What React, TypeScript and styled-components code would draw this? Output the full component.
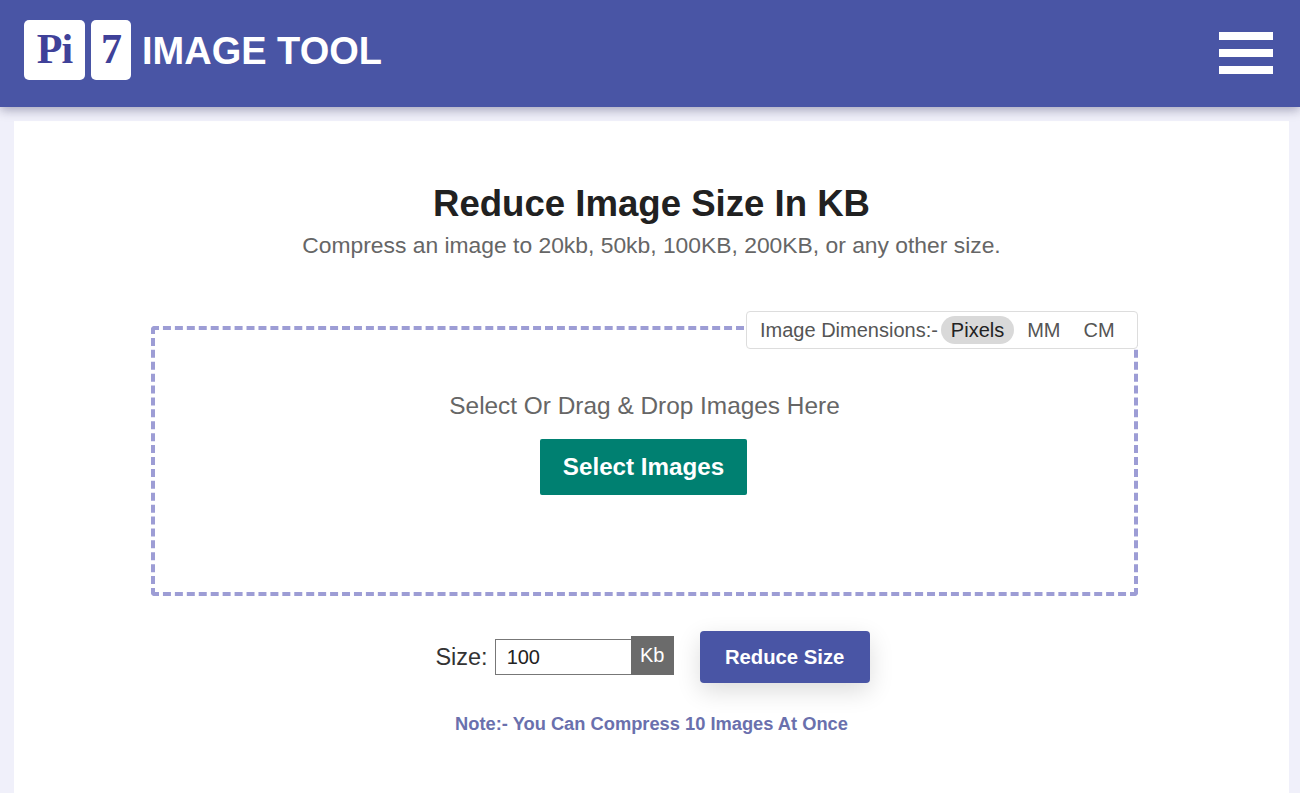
import styled, { createGlobalStyle } from "styled-components";

const GlobalStyle = createGlobalStyle`
  html, body {
    margin: 0;
    padding: 0;
    height: 793px;
    overflow: hidden;
    background: #f0f0fa;
    font-family: "Liberation Sans", Arial, sans-serif;
  }
  * {
    box-sizing: border-box;
  }
`;

const Header = styled.header`
  height: 107px;
  background: #4955a5;
  box-shadow: 0 3px 10px rgba(50, 50, 90, 0.4);
  display: flex;
  align-items: center;
  justify-content: space-between;
  padding: 0 27px 2px 24px;
  position: relative;
`;
const Logo = styled.div`
  display: flex;
  align-items: center;
  gap: 6px;
  margin-bottom: 5px;
`;
const Tile = styled.div<{ $width: number }>`
  width: ${(props) => props.$width}px;
  height: 60px;
  background: white;
  border-radius: 5px;
  color: #3f4199;
  font-family: "Liberation Serif", serif;
  font-weight: bold;
  font-size: 42px;
  line-height: 58px;
  letter-spacing: -1px;
  display: flex;
  justify-content: center;
`;
const Brand = styled.span`
  color: white;
  font-size: 38px;
  font-weight: bold;
  margin: 2px 0 0 5px;
`;
const Burger = styled.div`
  width: 54px;
  display: flex;
  flex-direction: column;
  gap: 9px;
  span {
    height: 8px;
    background: white;
  }
`;
const Card = styled.main`
  margin: 14px 11px 0 14px;
  height: 672px;
  background: white;
  display: flex;
  flex-direction: column;
  align-items: center;
  padding-top: 63px;
`;
const Title = styled.h1`
  margin: 0;
  font-size: 36.6px;
  line-height: 40px;
  color: #212121;
`;
const Subtitle = styled.p`
  margin: 7px 0 0;
  font-size: 22.85px;
  line-height: 28px;
  color: #666;
`;
const DropZone = styled.div`
  position: relative;
  width: 987px;
  height: 270px;
  margin: 67px 14px 0 0;
  border: 4px dashed #9d9dd5;
  border-radius: 4px;
  display: flex;
  flex-direction: column;
  align-items: center;
  padding-top: 62px;
`;
const Dimensions = styled.div`
  position: absolute;
  top: -19px;
  right: -4px;
  width: 392px;
  height: 38px;
  background: white;
  border: 1px solid #ddd;
  border-radius: 4px;
  display: flex;
  align-items: center;
  padding-left: 13px;
  font-size: 20px;
  color: #555;
`;
const Unit = styled.span<{ $active?: boolean }>`
  height: 28px;
  line-height: 28px;
  padding: 0 10px;
  border-radius: 14px;
  margin-left: 3px;
  background: ${(props) => (props.$active ? "#d9d9d9" : "transparent")};
  color: ${(props) => (props.$active ? "#222" : "#555")};
`;
const DropText = styled.div`
  font-size: 24.4px;
  line-height: 28px;
  color: #666;
`;
const SelectButton = styled.button`
  margin: 19px 2px 0 0;
  width: 207px;
  height: 56px;
  background: #008071;
  color: white;
  border: none;
  border-radius: 2px;
  font: bold 24.2px "Liberation Sans", Arial, sans-serif;
`;
const SizeRow = styled.div`
  display: flex;
  align-items: center;
  margin-top: 35px;
  padding-left: 2px;
  height: 52px;
`;
const SizeLabel = styled.label`
  font-size: 23.5px;
  color: #333;
  margin-right: 7px;
`;
const SizeInput = styled.input`
  width: 136px;
  height: 36px;
  border: 1.5px solid #777;
  border-right: none;
  padding: 0 11px;
  font: 20px "Liberation Sans", Arial, sans-serif;
  color: #222;
`;
const KbTag = styled.span`
  width: 43px;
  height: 39px;
  margin-bottom: 3px;
  background: #6b6b6b;
  color: white;
  font-size: 20px;
  display: flex;
  align-items: center;
  justify-content: center;
`;
const ReduceButton = styled.button`
  margin-left: 26px;
  width: 170px;
  height: 52px;
  background: #4955a5;
  color: white;
  border: none;
  border-radius: 4px;
  font: bold 20.3px "Liberation Sans", Arial, sans-serif;
  box-shadow: 0 8px 24px rgba(0, 0, 0, 0.14);
`;
const Note = styled.div`
  margin-top: 30px;
  font-size: 18.3px;
  font-weight: bold;
  color: #6a70ad;
`;

export default function App() {
  return (
    <>
      <GlobalStyle />
      <Header>
        <Logo>
          <Tile $width={61}>Pi</Tile>
          <Tile $width={40}>7</Tile>
          <Brand>IMAGE TOOL</Brand>
        </Logo>
        <Burger>
          <span />
          <span />
          <span />
        </Burger>
      </Header>
      <Card>
        <Title>Reduce Image Size In KB</Title>
        <Subtitle>Compress an image to 20kb, 50kb, 100KB, 200KB, or any other size.</Subtitle>
        <DropZone>
          <Dimensions>
            Image Dimensions:-
            <Unit $active>Pixels</Unit>
            <Unit>MM</Unit>
            <Unit>CM</Unit>
          </Dimensions>
          <DropText>Select Or Drag &amp; Drop Images Here</DropText>
          <SelectButton>Select Images</SelectButton>
        </DropZone>
        <SizeRow>
          <SizeLabel>Size:</SizeLabel>
          <SizeInput defaultValue="100" />
          <KbTag>Kb</KbTag>
          <ReduceButton>Reduce Size</ReduceButton>
        </SizeRow>
        <Note>Note:- You Can Compress 10 Images At Once</Note>
      </Card>
    </>
  );
}
